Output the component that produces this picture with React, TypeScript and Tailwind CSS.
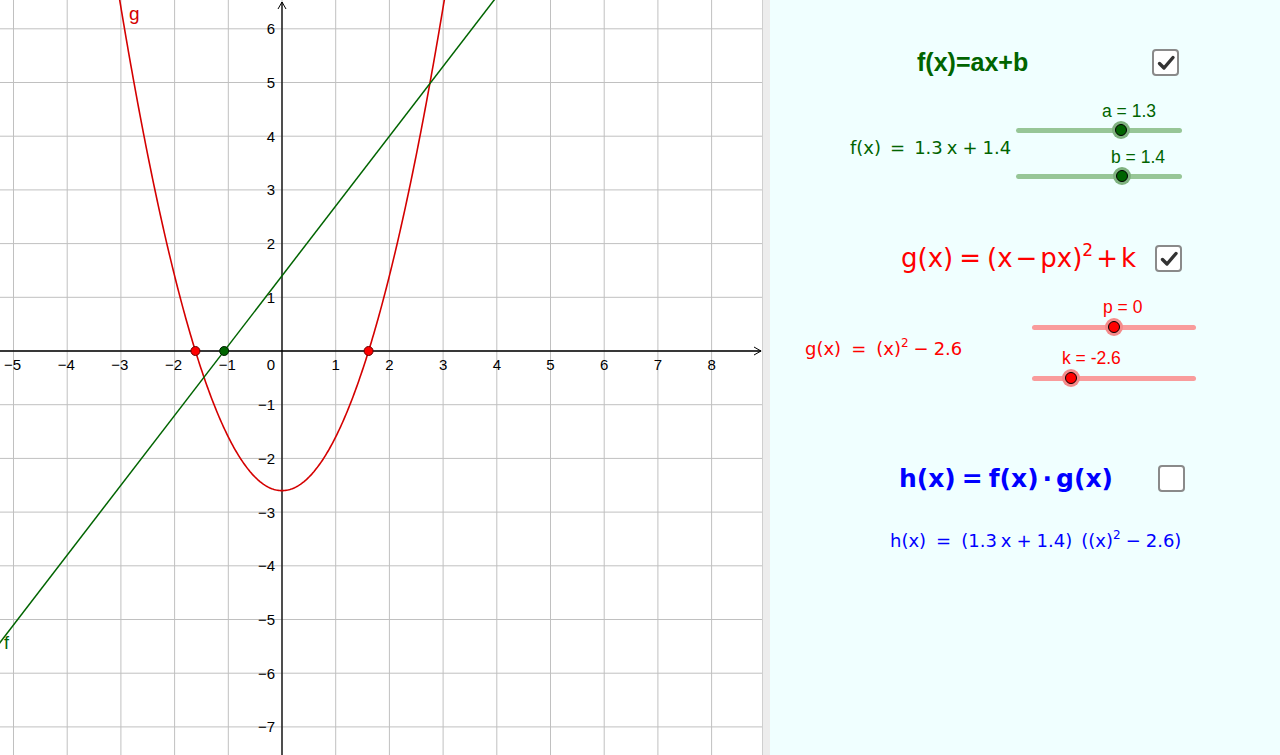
import React from "react";

const U = 53.7;
const OX = 282;
const OY = 351;
const W = 762;
const H = 755;
const X = (x: number) => OX + U * x;
const Y = (y: number) => OY - U * y;

function Graph() {
  const vx: number[] = [];
  for (let k = -5; k <= 8; k++) vx.push(k);
  const hy: number[] = [];
  for (let k = -7; k <= 6; k++) hy.push(k);
  const pts: string[] = [];
  for (let i = 0; i <= 300; i++) {
    const x = -3.2 + (6.4 * i) / 300;
    const y = x * x - 2.6;
    pts.push(`${X(x).toFixed(2)},${Y(y).toFixed(2)}`);
  }
  const fx0 = -6;
  const fx1 = 5;
  const lbl = (k: number) => (k < 0 ? `\u2212${-k}` : `${k}`);
  const r = Math.sqrt(2.6);
  return (
    <svg width={W} height={H} className="block shrink-0 bg-white" style={{ fontFamily: "'Liberation Sans', Arial, sans-serif" }}>
      {vx.map((k) => (
        <line key={"v" + k} x1={X(k)} x2={X(k)} y1={0} y2={H} stroke="#c0c0c0" strokeWidth={1} />
      ))}
      {hy.map((k) => (
        <line key={"h" + k} x1={0} x2={W} y1={Y(k)} y2={Y(k)} stroke="#c0c0c0" strokeWidth={1} />
      ))}
      <line x1={0} x2={761} y1={OY} y2={OY} stroke="#000" strokeWidth={1.3} />
      <polyline points={`754,347 761,351 754,355`} fill="none" stroke="#000" strokeWidth={1} />
      <line x1={OX} x2={OX} y1={H} y2={2} stroke="#000" strokeWidth={1.3} />
      <polyline points={`278,9 282,2 286,9`} fill="none" stroke="#000" strokeWidth={1} />
      {vx
        .filter((k) => k !== 0)
        .map((k) => (
          <text key={"xl" + k} x={X(k) - (k < 0 ? 1 : 0)} y={370} fontSize={15} textAnchor="middle" fill="#000">
            {lbl(k)}
          </text>
        ))}
      <text x={271} y={370} fontSize={15} textAnchor="middle" fill="#000">0</text>
      {hy
        .filter((k) => k !== 0)
        .map((k) => (
          <text key={"yl" + k} x={275} y={Y(k) + 5.5} fontSize={15} textAnchor="end" fill="#000">
            {lbl(k)}
          </text>
        ))}
      <polyline points={pts.join(" ")} fill="none" stroke="#d40000" strokeWidth={1.6} />
      <line x1={X(fx0)} y1={Y(1.3 * fx0 + 1.4)} x2={X(fx1)} y2={Y(1.3 * fx1 + 1.4)} stroke="#006400" strokeWidth={1.5} />
      <circle cx={X(-r)} cy={OY} r={4.5} fill="#ff0000" stroke="#600" strokeWidth={1} />
      <circle cx={X(r)} cy={OY} r={4.5} fill="#ff0000" stroke="#600" strokeWidth={1} />
      <circle cx={X(-1.4 / 1.3)} cy={OY} r={4.5} fill="#006400" stroke="#002000" strokeWidth={1} />
      <text x={129} y={20} fontSize={19} fill="#d40000">g</text>
      <text x={4} y={649} fontSize={18} fill="#006400">f</text>
    </svg>
  );
}

function Check({ checked }: { checked: boolean }) {
  return (
    <div className="w-[27px] h-[27px] shrink-0 rounded-[4px] border-2 border-[#8a8a8a] bg-white flex items-center justify-center">
      {checked && (
        <svg width="22" height="22" viewBox="0 0 22 22">
          <path d="M4.5 11.5 L9 16 L18 5.5" fill="none" stroke="#333" strokeWidth={3.4} strokeLinecap="round" strokeLinejoin="round" />
        </svg>
      )}
    </div>
  );
}

type SliderProps = {
  label: string;
  value: number;
  labelLeft: string;
  color: "green" | "red";
  labelH: string;
  width: number;
};

function Slider({ label, value, labelLeft, color, labelH, width }: SliderProps) {
  const frac = (value + 5) / 10;
  const green = color === "green";
  return (
    <div className="flex flex-col" style={{ width }}>
      <div className={`${labelH} ${labelLeft} text-[17.5px] whitespace-nowrap ${green ? "text-[#006400]" : "text-[#ff0000]"}`}>
        {label}
      </div>
      <div className="relative h-[18px] flex items-center">
        <div className={`w-full h-[5px] rounded-full ${green ? "bg-[#97c697]" : "bg-[#f99c9c]"}`} />
        <div
          className={`absolute top-0 w-[18px] h-[18px] -ml-[9px] rounded-full flex items-center justify-center ${green ? "bg-[#7fb27f]" : "bg-[#f58a8a]"}`}
          style={{ left: frac * width }}
        >
          <div className={`w-[12px] h-[12px] rounded-full border border-black ${green ? "bg-[#006400]" : "bg-[#ff0000]"}`} />
        </div>
      </div>
    </div>
  );
}

const math = { fontFamily: "'DejaVu Sans', 'Liberation Sans', sans-serif" };

export default function App() {
  return (
    <div className="w-[1280px] h-[755px] flex overflow-hidden" style={{ fontFamily: "'Liberation Sans', Arial, sans-serif" }}>
      <Graph />
      <div className="w-[8px] shrink-0 bg-[#ededed] border-l border-[#cfcfcf]" />
      <div className="flex-1 bg-[#f0ffff] flex flex-col">
        {/* f title */}
        <div className="mt-[49px] flex items-center h-[27px] pl-[147px]">
          <div className="w-[235px] text-[25px] font-bold text-[#006400] leading-[27px] whitespace-nowrap">f(x)=ax+b</div>
          <Check checked />
        </div>
        {/* f block */}
        <div className="mt-[25px] flex items-start">
          <div className="ml-[80px] w-[166px] mt-[36px] h-[22px] leading-[22px] text-[18px] text-[#006400] whitespace-nowrap" style={math}>
            f(x)<span className="mx-[9px]">=</span>1.3<span className="ml-[4px]">x</span>
            <span className="mx-[5px]">+</span>1.4
          </div>
          <div className="flex flex-col gap-[9px]">
            <Slider label="a = 1.3" value={1.3} labelLeft="pl-[86px]" color="green" labelH="h-[20px] leading-[20px]" width={166} />
            <Slider label="b = 1.4" value={1.4} labelLeft="pl-[95px]" color="green" labelH="h-[19px] leading-[19px]" width={166} />
          </div>
        </div>
        {/* g title */}
        <div className="mt-[60px] flex items-center h-[27px] pl-[131px]">
          <div className="w-[254px] text-[26px] text-[#ff0000] leading-[27px] whitespace-nowrap" style={math}>
            g(x)<span className="mx-[6px]">=</span>(x<span className="mx-[3px]">−</span>px)<sup className="text-[17px] relative -top-[11px]">2</sup>
            <span className="mx-[3px]">+</span>k
          </div>
          <Check checked />
        </div>
        {/* g block */}
        <div className="mt-[24px] flex items-start">
          <div className="ml-[35px] w-[227px] mt-[42px] h-[22px] leading-[22px] text-[18px] text-[#ff0000] whitespace-nowrap" style={math}>
            g(x)<span className="mx-[10px]">=</span>(x)<sup className="text-[12px] relative -top-[8px]">2</sup>
            <span className="mx-[5px]">−</span>2.6
          </div>
          <div className="flex flex-col gap-[11px]">
            <Slider label="p = 0" value={0} labelLeft="pl-[71px]" color="red" labelH="h-[22px] leading-[22px]" width={164} />
            <Slider label="k = -2.6" value={-2.6} labelLeft="pl-[30px]" color="red" labelH="h-[22px] leading-[22px]" width={164} />
          </div>
        </div>
        {/* h title */}
        <div className="mt-[78px] flex items-center h-[27px] pl-[129px]">
          <div className="w-[259px] text-[25px] font-bold text-[#0000ff] leading-[27px] whitespace-nowrap" style={math}>
            h(x)<span className="mx-[6px]">=</span>f(x)<span className="mx-[4px]">·</span>g(x)
          </div>
          <Check checked={false} />
        </div>
        {/* h formula */}
        <div className="mt-[36px] pl-[120px] h-[26px] leading-[26px] text-[18px] text-[#0000ff] whitespace-nowrap" style={math}>
          h(x)<span className="mx-[10px]">=</span>(1.3<span className="ml-[4px]">x</span>
          <span className="mx-[5px]">+</span>1.4)<span className="ml-[9px]">((x)</span>
          <sup className="text-[12px] relative -top-[8px]">2</sup>
          <span className="mx-[5px]">−</span>2.6)
        </div>
      </div>
    </div>
  );
}
